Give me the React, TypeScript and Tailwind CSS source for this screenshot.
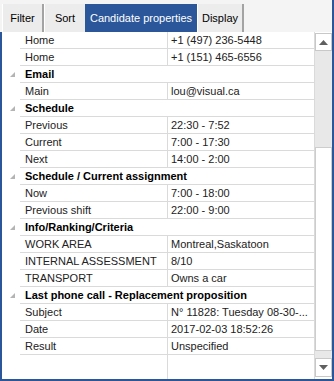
type Row = { cat?: boolean; label: string; value?: string };

const rows: Row[] = [
  { label: "Home", value: "+1 (497) 236-5448" },
  { label: "Home", value: "+1 (151) 465-6556" },
  { cat: true, label: "Email" },
  { label: "Main", value: "lou@visual.ca" },
  { cat: true, label: "Schedule" },
  { label: "Previous", value: "22:30 - 7:52" },
  { label: "Current", value: "7:00 - 17:30" },
  { label: "Next", value: "14:00 - 2:00" },
  { cat: true, label: "Schedule / Current assignment" },
  { label: "Now", value: "7:00 - 18:00" },
  { label: "Previous shift", value: "22:00 - 9:00" },
  { cat: true, label: "Info/Ranking/Criteria" },
  { label: "WORK AREA", value: "Montreal,Saskatoon" },
  { label: "INTERNAL ASSESSMENT", value: "8/10" },
  { label: "TRANSPORT", value: "Owns a car" },
  { cat: true, label: "Last phone call - Replacement proposition" },
  { label: "Subject", value: "N° 11828: Tuesday 08-30-..." },
  { label: "Date", value: "2017-02-03 18:52:26" },
  { label: "Result", value: "Unspecified" },
];

const tabs = [
  { name: "Filter", w: "w-[42px] border-r-2 border-r-[#a3a3a3]" },
  { name: "Sort", w: "w-[41px]" },
  { name: "Candidate properties", w: "w-[112px]", active: true },
  { name: "Display", w: "w-[47px] border-r-2 border-r-[#a3a3a3]" },
];

function Expander() {
  return (
    <svg width="5" height="5" viewBox="0 0 5 5">
      <polygon points="5,0 5,5 0,5" fill="#b4b4b4" />
    </svg>
  );
}

function Arrow({ down }: { down?: boolean }) {
  return (
    <svg width="9" height="5" viewBox="0 0 9 5">
      <polygon points={down ? "0,0 9,0 4.5,5" : "4.5,0 9,5 0,5"} fill="#606060" />
    </svg>
  );
}

function PropRow({ row }: { row: Row }) {
  return (
    <div className="flex h-[17px] shrink-0">
      <div className="w-[18px] flex items-center justify-center pl-[2px]">
        {row.cat && <Expander />}
      </div>
      {row.cat ? (
        <div className="flex-1 border-b border-[#dadada] pl-[5px] leading-[16px] font-bold text-black whitespace-nowrap">
          {row.label}
        </div>
      ) : (
        <>
          <div className="w-[147px] border-b border-[#dadada] pl-[5px] leading-[16px] text-[#222] whitespace-nowrap overflow-hidden">
            {row.label}
          </div>
          <div className="flex-1 border-b border-l border-[#dadada] pl-[3px] leading-[16px] text-[#222] whitespace-nowrap overflow-hidden">
            {row.value}
          </div>
        </>
      )}
    </div>
  );
}

export default function App() {
  return (
    <div
      className="w-[334px] h-[381px] flex flex-col bg-[#f4f4f4] border-r-2 border-[#2b579a] text-[11px]"
      style={{ fontFamily: '"Liberation Sans", Arial, sans-serif' }}
    >
      <div className="h-[32px] flex items-end pl-[2px] shrink-0">
        {tabs.map((t) => (
          <div
            key={t.name}
            className={`h-[28px] flex items-center justify-center ${t.w} ${
              t.active ? "bg-[#2b579a] text-white" : "bg-[#ececec] text-black border-l border-l-white"
            }`}
          >
            {t.name}
          </div>
        ))}
      </div>
      <div className="flex-1 flex bg-white border-l-2 border-b-2 border-[#2b579a] min-h-0">
        <div className="flex-1 flex flex-col">
          {rows.map((r, i) => (
            <PropRow key={i} row={r} />
          ))}
          <div className="flex-1 flex">
            <div className="w-[18px]" />
            <div className="w-[147px]" />
            <div className="flex-1 border-l border-[#dadada]" />
          </div>
        </div>
        <div className="w-[18px] flex flex-col bg-[#e8e8e8] border-l border-[#dadada]">
          <div className="h-[1px] bg-white" />
          <div className="h-[18px] bg-white border border-[#c8c8c8] flex items-center justify-center">
            <Arrow />
          </div>
          <div className="h-[96px]" />
          <div className="h-[204px] bg-white border border-[#cdcdcd]" />
          <div className="h-[7px]" />
          <div className="h-[19px] bg-white border border-[#c8c8c8] flex items-center justify-center">
            <Arrow down />
          </div>
          <div className="flex-1 bg-white" />
        </div>
      </div>
    </div>
  );
}
